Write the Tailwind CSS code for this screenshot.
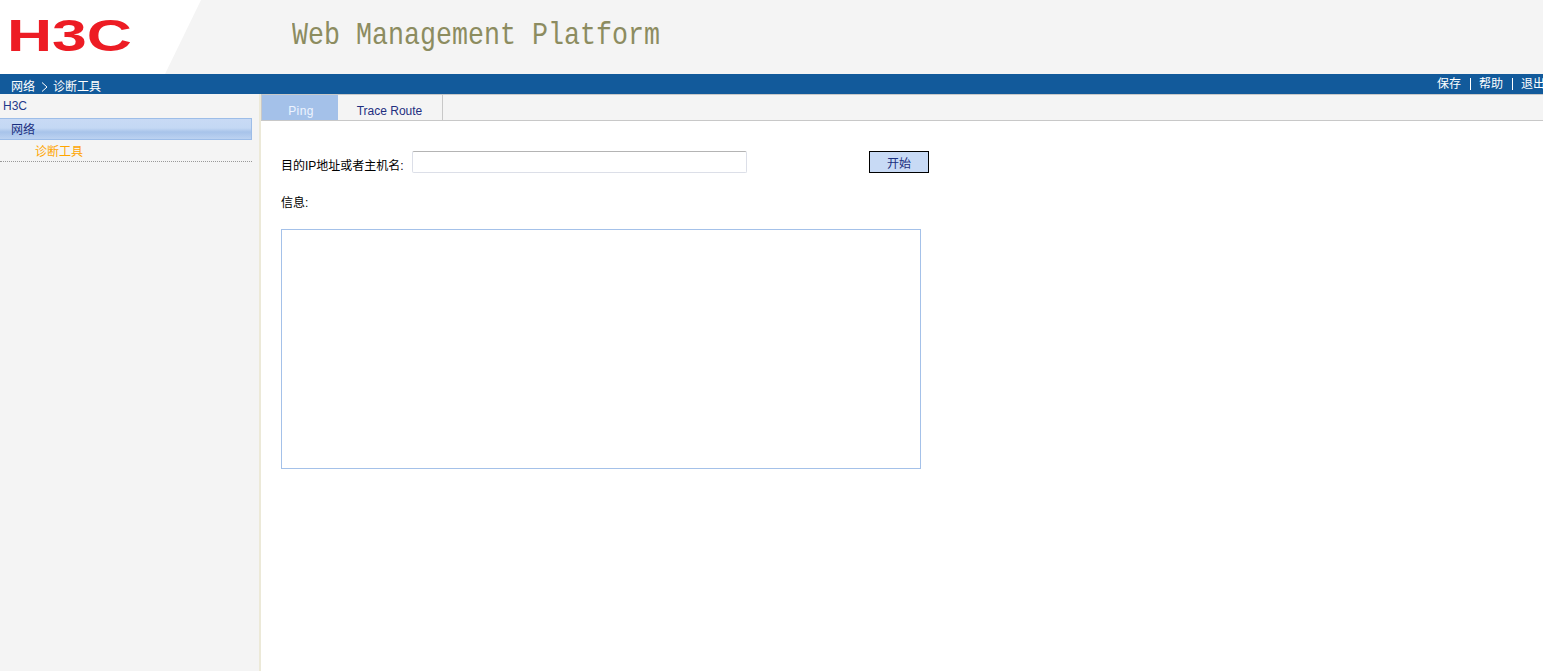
<!DOCTYPE html>
<html lang="zh-CN">
<head>
    <meta charset="UTF-8">
    <title>Web Management Platform</title>
    <script src="https://cdn.jsdelivr.net/npm/@tailwindcss/browser@4"></script>
</head>
<body class="h-[671px] overflow-hidden bg-white text-xs font-['Liberation_Sans','Noto_Sans_CJK_SC',sans-serif]">
    <!-- top banner -->
    <header class="relative flex h-[74px] items-center bg-[#f4f4f4]">
        <div class="absolute inset-y-0 left-0 w-[201px] bg-white [clip-path:polygon(0_0,100%_0,165px_100%,0_100%)]"></div>
        <svg class="relative mb-[2px] ml-[11px] h-[30px] w-[121px] overflow-visible" viewBox="0 0 121 30">
            <text x="-4" y="30" textLength="125" lengthAdjust="spacingAndGlyphs" fill="#ed1c24" font-family="Liberation Sans" font-weight="bold" font-size="44">H3C</text>
        </svg>
        <h1 class="relative ml-[160px] scale-y-[1.2] font-['Liberation_Mono',monospace] text-[26.67px] text-[#8c8c60]">Web Management Platform</h1>
    </header>

    <!-- breadcrumb bar -->
    <div class="flex h-5 items-center justify-between overflow-hidden bg-[#125a9b] pl-[11px] text-white">
        <div class="mt-[5px] flex items-center">
            <span>网络</span>
            <svg class="ml-[6px] mr-[5px] h-[10px] w-[7px]" viewBox="0 0 7 10" fill="none" stroke="white"><path d="M1 0.5l5 4.5l-5 4.5"/></svg>
            <span>诊断工具</span>
        </div>
        <div class="flex shrink-0 items-center">
            <span>保存</span>
            <span class="ml-[9px] mr-2 h-3 w-px bg-white"></span>
            <span>帮助</span>
            <span class="ml-[9px] mr-2 h-3 w-px bg-white"></span>
            <span class="w-[22px] overflow-hidden whitespace-nowrap">退出</span>
        </div>
    </div>

    <div class="flex h-[577px]">
        <!-- left menu -->
        <aside class="w-[261px] shrink-0 border-r-2 border-[#ece9d8] bg-[#f4f4f4] pr-[7px]">
            <div class="h-6 pl-[3px] pt-[4px] text-[#1f3a8a]">H3C</div>
            <div class="flex h-[22px] items-center border border-l-0 border-[#9dbde8] bg-[linear-gradient(#c8daf5_0%,#c4d8f4_45%,#a7c3ea_65%,#bcd2f1_100%)] pl-[11px] pt-[2px] text-[#1a2f80]">网络</div>
            <div class="h-[22px] border-b border-dotted border-[#999] pl-[35px] pt-1 text-[#ffa500]">诊断工具</div>
        </aside>

        <main class="min-w-0 flex-1">
            <!-- tabs -->
            <div class="flex h-[27px] border-y border-[#c8c8c8] bg-[#f4f4f4]">
                <div class="flex w-[77px] items-end justify-center border-l border-[#c8c8c8] bg-[#a4c1e9] pb-px pl-[2px] tracking-[0.4px] text-[#eef4ff]">Ping</div>
                <div class="flex w-[105px] items-end justify-center border-r border-[#c8c8c8] pb-px pr-px text-[#1f2f80]">Trace Route</div>
            </div>

            <form class="pl-5 pt-[30px]">
                <div class="flex items-start">
                    <label class="mt-[7px] w-[131px] text-black">目的IP地址或者主机名:</label>
                    <input type="text" class="h-[22px] w-[335px] rounded-[2px] border border-t-[#b4b4b4] border-r-[#dcdfe8] border-b-[#dcdfe8] border-l-[#dcdfe8] bg-white">
                    <button type="button" class="ml-[122px] h-[22px] w-[60px] border border-black bg-[#c8daf5] pt-[3px] text-[#1a2f80]">开始</button>
                </div>
                <div class="mt-[21px] text-black">信息:</div>
                <textarea class="mt-[18px] block h-[240px] w-[640px] resize-none border border-[#a4c1e9] bg-white"></textarea>
            </form>
        </main>
    </div>
</body>
</html>
